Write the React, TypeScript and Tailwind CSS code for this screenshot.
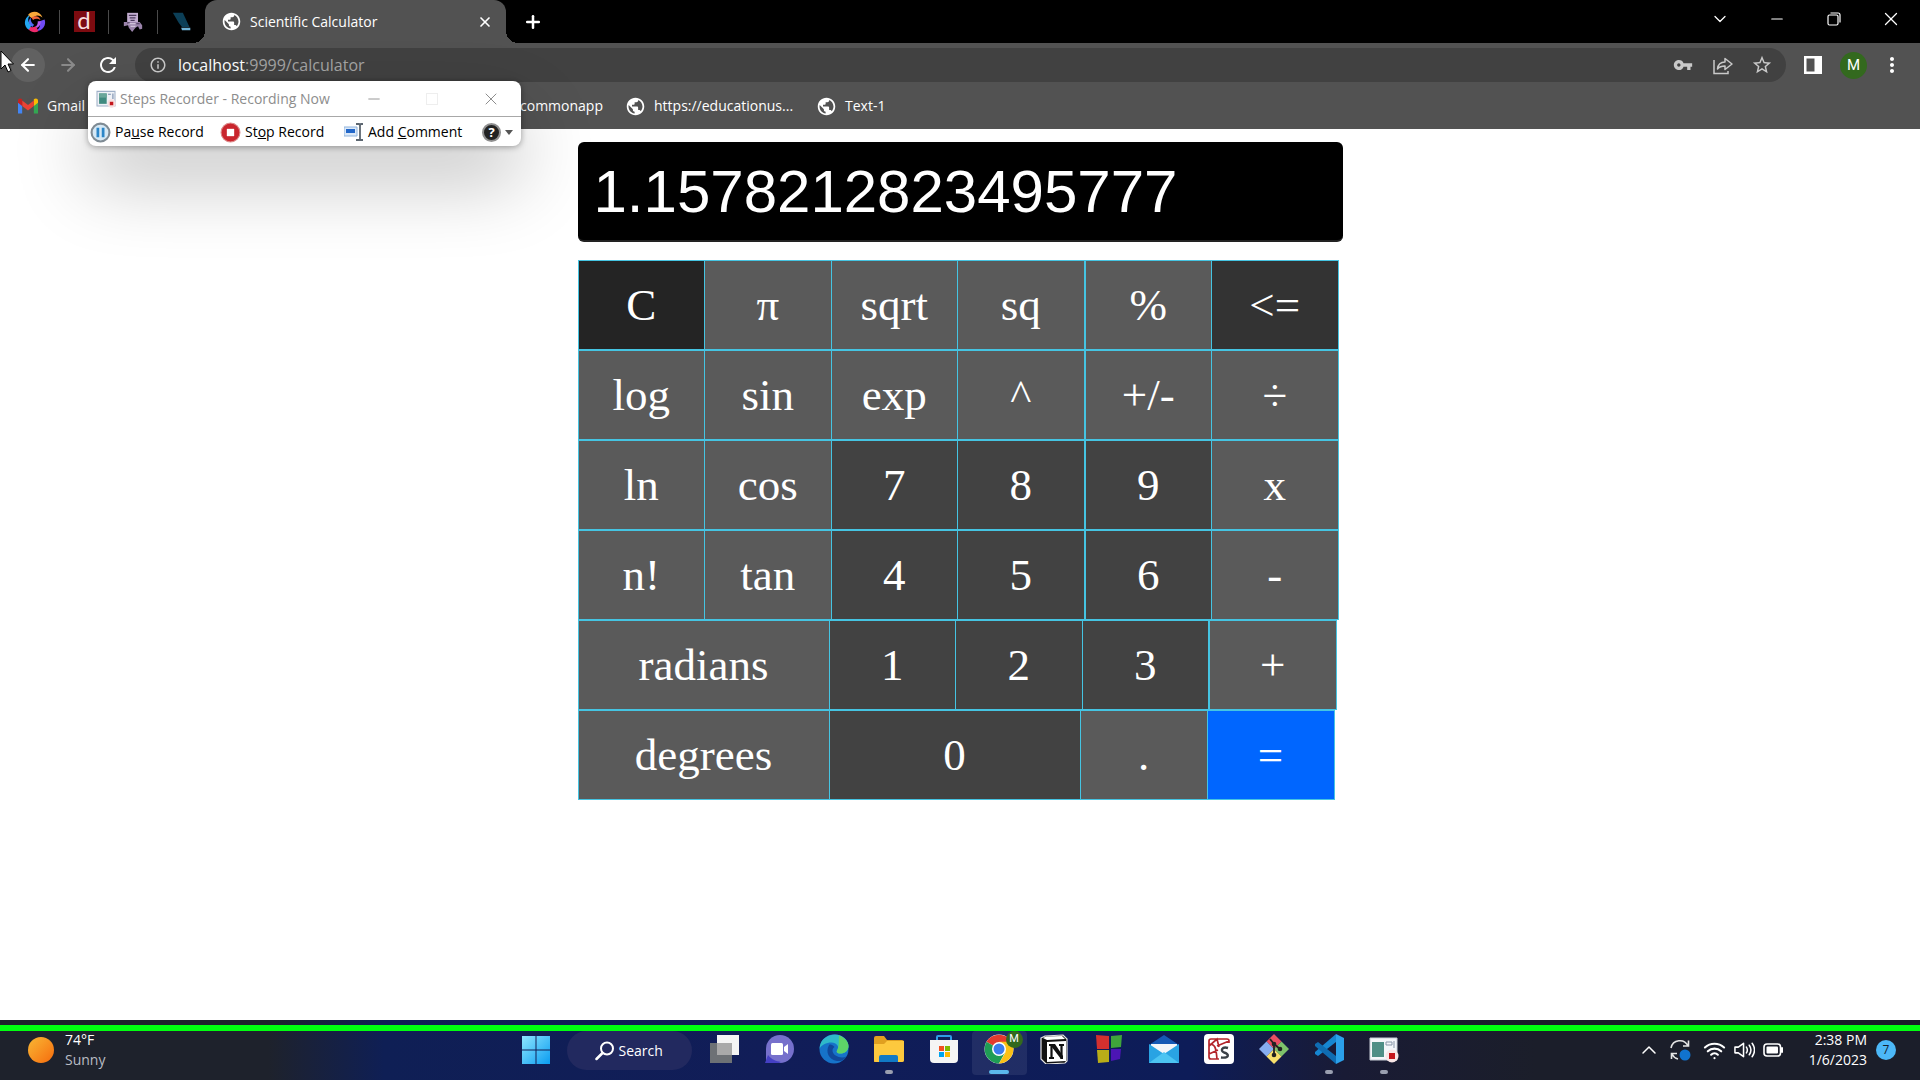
import React from "react";
import { X, Plus, ChevronDown, ChevronUp, Minus, ArrowLeft, ArrowRight, Wifi } from "lucide-react";
import { MdRefresh, MdPublic, MdVpnKey, MdStarBorder, MdMoreVert, MdInfoOutline } from "react-icons/md";

const UI = "font-['Open_Sans','Noto_Sans',sans-serif]";

/* ---------- browser icons ---------- */

function SwirlIcon() {
  const blade = "M5 5C9 0 17 1 19.500 7.500C16 4.500 12 4.800 9.500 8.500C8 7.500 6.300 6.500 5 5Z";
  const inner = "M8.500 7.500C12 5 16.500 6 17.500 10C14.500 8 12 8.500 10 10Z";
  return (
    <svg viewBox="0 0 24 24" className="size-6">
      <path d={blade} fill="#f9a83a" />
      <path d={inner} fill="#f2643a" />
      <path d={blade} fill="#6f4bf5" transform="rotate(120 12 12)" />
      <path d={inner} fill="#b45cf0" transform="rotate(120 12 12)" />
      <path d={blade} fill="#ee2a6b" transform="rotate(205 12 12)" />
      <path d={blade} fill="#23a6f2" transform="rotate(265 12 12)" />
      <path d={inner} fill="#4f6cf5" transform="rotate(245 12 12)" />
    </svg>
  );
}

function RobotIcon() {
  return (
    <svg viewBox="0 0 24 24" className="size-5">
      <path d="M5 1h13v11H5z" fill="#c3aed1" />
      <path d="M7 4h9M8 7h7M9 10h5" stroke="#4b3a5c" strokeWidth="1.500" />
      <path d="M1 12h19l3 4v4l-3 1-2-4-3 2-4 5-4-5-1-3-5 1z" fill="#9a83aa" />
      <path d="M6 14h9M9 17h6" stroke="#e2d9ea" strokeWidth="1.300" />
      <path d="M5 13h3M16 14h4" stroke="#4b3a5c" strokeWidth="1.300" />
    </svg>
  );
}

function FinIcon() {
  return (
    <svg viewBox="0 0 24 24" className="size-5">
      <path d="M1 1h12l8 17h-9L8 13z" fill="#0c3f57" />
      <path d="M11 19h11v3H12z" fill="#6fb4d8" />
    </svg>
  );
}

function GmailIcon() {
  return (
    <svg viewBox="0 0 24 18" className="h-4 w-5">
      <path d="M0 2v16h5V6z" fill="#4285f4" />
      <path d="M24 2v16h-5V6z" fill="#34a853" />
      <path d="M19 2.500V9l5-4V2.500C24 0 21-.8 19 1z" fill="#fbbc04" />
      <path d="M5 2.500V9l7 5.500L19 9V2.500l-7 5.300z" fill="#ea4335" />
      <path d="M5 2.500V9L0 5V2.500C0 0 3-.8 5 1z" fill="#c5221f" />
    </svg>
  );
}

function ShareIcon() {
  return (
    <svg viewBox="0 0 20 20" className="size-5" fill="none" stroke="#c9c9c9" strokeWidth="1.500">
      <path d="M1 5v13.500h14V16" />
      <path d="M4.500 14C5 9.500 8 7 12 7V3.500L19 9l-7 5.500V11c-3.500 0-5.500.5-7.500 3z" strokeLinejoin="round" />
    </svg>
  );
}

function RecorderIcon({ className }: { className: string }) {
  return (
    <svg viewBox="0 0 28 26" className={className}>
      <path d="M1 2h26v21H1z" fill="#eef1f6" stroke="#9fb0c8" strokeWidth="1.500" />
      <path d="M4 5h11v15H4z" fill="#3f8a7f" />
      <path d="M4 5h11v6H4z" fill="#6aa79b" />
      <path d="M17 6h4M24 5v8" stroke="#6f86a8" strokeWidth="1.500" />
      <circle cx="22" cy="19.500" r="6" fill="#f6dede" />
      <path d="M19.500 17h5v5h-5z" fill="#c4161c" />
    </svg>
  );
}

/* ---------- tab strip and toolbars ---------- */

function TabStrip() {
  return (
    <div className="flex h-[43px] items-stretch bg-black text-white">
      <div className="flex items-center pl-[11px]">
        <button aria-label="Pinned tab 1" className="flex h-6 w-[49px] items-center justify-center border-r border-[#4a4a4a]"><SwirlIcon /></button>
        <button aria-label="Pinned tab 2" className="flex h-6 w-[49px] items-center justify-center border-r border-[#4a4a4a]">
          <span className="flex size-[21px] items-center justify-center bg-[#7d0b10] pb-1 font-['Lato',sans-serif] text-2xl leading-none text-[#f6dcdc]">d</span>
        </button>
        <button aria-label="Pinned tab 3" className="flex h-6 w-[49px] items-center justify-center border-r border-[#4a4a4a]"><RobotIcon /></button>
        <button aria-label="Pinned tab 4" className="flex h-6 w-[47px] items-center justify-center"><FinIcon /></button>
      </div>
      <div className="relative flex w-[301px] items-center rounded-t-xl bg-[#525252] pr-3 pl-4">
        <span className="absolute bottom-0 -left-3 size-3 bg-[radial-gradient(circle_at_0_0,transparent_12px,#525252_12px)]" />
        <span className="absolute -right-3 bottom-0 size-3 bg-[radial-gradient(circle_at_100%_0,transparent_12px,#525252_12px)]" />
        <MdPublic className="size-[21px]" />
        <span className="ml-2 flex-1 truncate text-sm">Scientific Calculator</span>
        <button aria-label="Close tab" className="p-px"><X className="size-4" strokeWidth={2.5} /></button>
      </div>
      <button aria-label="New tab" className="ml-4 px-px"><Plus className="size-5" strokeWidth={3} /></button>
      <div className="ml-auto flex items-center pr-px pb-[6px]">
        <button aria-label="Search tabs" className="flex w-[57px] justify-center"><ChevronDown className="size-5" strokeWidth={1.5} /></button>
        <button aria-label="Minimize" className="flex w-[57px] justify-center"><Minus className="size-[18px]" strokeWidth={1.5} /></button>
        <button aria-label="Restore" className="flex w-[57px] justify-center">
          <svg viewBox="0 0 14 14" className="size-[14px]" fill="none" stroke="white" strokeWidth="1.200">
            <rect x="1" y="3" width="10" height="10" rx="1.500" />
            <path d="M3.500 1H11a2 2 0 0 1 2 2v7.500" />
          </svg>
        </button>
        <button aria-label="Close window" className="flex w-[57px] justify-center"><X className="size-[22px]" strokeWidth={1.4} /></button>
      </div>
    </div>
  );
}

function Toolbar() {
  return (
    <div className="flex h-11 items-center bg-[#525252] pr-4 text-white">
      <button aria-label="Back" className="ml-[11px] flex size-[34px] items-center justify-center rounded-full bg-[#616161]"><ArrowLeft className="size-5" strokeWidth={2.5} /></button>
      <button aria-label="Forward" className="ml-[6px] flex size-[34px] items-center justify-center text-[#8b8b8b]"><ArrowRight className="size-5" strokeWidth={2.5} /></button>
      <button aria-label="Reload" className="ml-[6px] flex size-[34px] items-center justify-center"><MdRefresh className="size-6" /></button>
      <div className="ml-[10px] flex h-[34px] flex-1 items-center rounded-full bg-[#414141] pr-[13px] pl-[14px] text-[#c9c9c9]">
        <MdInfoOutline className="size-[18px]" />
        <span className="ml-[11px] flex-1 text-base text-[#a4a4a4]"><span className="text-white">localhost</span>:9999/calculator</span>
        <button aria-label="Passwords"><MdVpnKey className="size-5" /></button>
        <button aria-label="Share" className="ml-5"><ShareIcon /></button>
        <button aria-label="Bookmark" className="ml-[18px]"><MdStarBorder className="size-[22px]" /></button>
      </div>
      <button aria-label="Side panel" className="ml-[18px]">
        <svg viewBox="0 0 18 18" className="size-[18px]"><path d="M0 0h18v18H0z" fill="white" /><path d="M2.500 2.500h8v13h-8z" fill="#525252" /></svg>
      </button>
      <button className="ml-[18px] flex size-[27px] items-center justify-center rounded-full bg-[#33691e] font-['Roboto',sans-serif] text-[15px]">M</button>
      <button aria-label="Menu" className="ml-[13px]"><MdMoreVert className="size-6" /></button>
    </div>
  );
}

function Bookmarks() {
  return (
    <nav className="flex h-[42px] items-center bg-[#525252] pb-1 pl-[18px] text-sm text-white">
      <a href="#gmail" className="flex w-[502px] items-center gap-[9px]"><GmailIcon />Gmail</a>
      <a href="#commonapp" className="w-[105px]">commonapp</a>
      <a href="#education" className="flex w-[191px] items-center gap-2"><MdPublic className="size-[21px]" />https://educationus...</a>
      <a href="#text" className="flex items-center gap-2"><MdPublic className="size-[21px]" />Text-1</a>
    </nav>
  );
}

function StepsRecorder() {
  return (
    <section className="absolute top-[81px] left-[88px] w-[433px] rounded-lg bg-white text-black shadow-[0_36px_76px_rgba(0,0,0,0.24),0_1px_6px_rgba(0,0,0,0.35)]">
      <header className="flex h-9 items-center border-b border-[#a8a8a8] pl-2 text-[#8d8d8d]">
        <RecorderIcon className="h-[18px] w-5" />
        <h2 className="ml-1 w-[224px] text-sm whitespace-nowrap">Steps Recorder - Recording Now</h2>
        <button aria-label="Minimize recorder" className="flex w-[59px] justify-center"><Minus className="size-[18px]" strokeWidth={1.2} /></button>
        <button aria-label="Maximize recorder" className="flex w-[57px] justify-center" disabled><span className="size-3 border border-[#eeeeee]" /></button>
        <button aria-label="Close recorder" className="flex w-[61px] justify-center"><X className="size-5" strokeWidth={1.2} /></button>
      </header>
      <div className="flex h-[29px] items-center pt-px pl-[2px] text-sm whitespace-nowrap">
        <button className="flex w-[130px] items-center gap-1">
          <svg viewBox="0 0 20 20" className="size-[21px]"><circle cx="10" cy="10" r="8.500" fill="#d5e8f5" stroke="#7f8b94" strokeWidth="2" /><path d="M7.500 5.500v9M12.500 5.500v9" stroke="#2b86c8" strokeWidth="2.600" /></svg>
          <span>Pa<u>u</u>se Record</span>
        </button>
        <button className="flex w-[124px] items-center gap-1">
          <svg viewBox="0 0 20 20" className="size-[21px]"><circle cx="10" cy="10" r="9" fill="#c9252d" stroke="#dd8a8a" /><path d="M6.500 6.500h7v7h-7z" fill="white" /></svg>
          <span>St<u>o</u>p Record</span>
        </button>
        <button className="flex w-[138px] items-center gap-1">
          <svg viewBox="0 0 20 20" className="size-5"><path d="M0 5h13v9H0z" fill="#dce9f8" stroke="#8fb3dc" /><path d="M2 7h9v4H2z" fill="#2267c9" /><path d="M12 2h3l1 1 1-1h2M12 18h3l1-1 1 1h2M16 3v14" stroke="#5c6670" strokeWidth="1.800" fill="none" /></svg>
          <span>Add <u>C</u>omment</span>
        </button>
        <button aria-label="Help" className="flex items-center gap-1">
          <span className="flex size-[19px] items-center justify-center rounded-full border-2 border-[#8f8f8f] bg-[#222222] text-[13px] font-bold text-white">?</span>
          <svg viewBox="0 0 8 5" className="h-[5px] w-2"><path d="M0 0h8L4 5z" fill="#555" /></svg>
        </button>
      </div>
    </section>
  );
}

/* ---------- calculator ---------- */

type Key = { t: string; tone?: "clear" | "back" | "num" | "eq"; wide?: boolean; edge?: boolean };

const rows: { width: string; keys: Key[] }[] = [
  { width: "w-[761px]", keys: [{ t: "C", tone: "clear" }, { t: "π" }, { t: "sqrt" }, { t: "sq", edge: true }, { t: "%" }, { t: "<=", tone: "back" }] },
  { width: "w-[761px]", keys: [{ t: "log" }, { t: "sin" }, { t: "exp" }, { t: "^", edge: true }, { t: "+/-" }, { t: "÷" }] },
  { width: "w-[761px]", keys: [{ t: "ln" }, { t: "cos" }, { t: "7", tone: "num" }, { t: "8", tone: "num", edge: true }, { t: "9", tone: "num" }, { t: "x" }] },
  { width: "w-[761px]", keys: [{ t: "n!" }, { t: "tan" }, { t: "4", tone: "num" }, { t: "5", tone: "num", edge: true }, { t: "6", tone: "num" }, { t: "-" }] },
  { width: "w-[759px]", keys: [{ t: "radians", wide: true }, { t: "1", tone: "num" }, { t: "2", tone: "num" }, { t: "3", tone: "num", edge: true }, { t: "+" }] },
  { width: "w-[757px]", keys: [{ t: "degrees", wide: true }, { t: "0", tone: "num", wide: true }, { t: "." }, { t: "=", tone: "eq" }] },
];

const tones = {
  clear: "bg-[#242424]",
  back: "bg-[#333333]",
  num: "bg-[#424242]",
  eq: "bg-[#0066ff]",
  fn: "bg-[#5a5a5a]",
};

function Calculator() {
  return (
    <main className="mx-auto w-[765px] max-w-full pt-[13px]">
      <input
        aria-label="Result"
        readOnly
        value="1.1578212823495777"
        className="block h-[100px] w-full rounded-md border-b-2 border-[#222222] bg-black px-4 font-['Liberation_Sans',Arial,sans-serif] text-6xl text-white outline-none"
      />
      <div className="mt-[18px] font-['Liberation_Serif','Times_New_Roman',serif] text-[45px] leading-none text-white">
        {rows.map((row, i) => (
          <div key={i} className={`flex max-w-full ${row.width}`}>
            {row.keys.map((k) => (
              <button
                key={k.t}
                className={`h-[90px] border-y border-l border-[#45c4e2] last:border-r ${k.wide ? "w-[251px]" : "min-w-0 flex-1"} ${k.edge ? "border-r" : ""} ${tones[k.tone ?? "fn"]}`}
              >
                {k.t}
              </button>
            ))}
          </div>
        ))}
      </div>
    </main>
  );
}

/* ---------- taskbar ---------- */

function WindowsIcon() {
  return (
    <svg viewBox="0 0 30 30" className="size-[30px]">
      <defs><linearGradient id="win" x1="0" y1="0" x2="1" y2="1"><stop stopColor="#8ee6ff" /><stop offset="1" stopColor="#0a9cf0" /></linearGradient></defs>
      <path d="M1 1h13.500v13.500H1zM15.500 1H29v13.500H15.500zM1 15.500h13.500V29H1zM15.500 15.500H29V29H15.500z" fill="url(#win)" />
    </svg>
  );
}

const apps: { name: string; mark?: "run" | "active"; icon: React.ReactNode }[] = [
  { name: "Task View", icon: <><path d="M8 1h22v20H8z" fill="#f4f4f4" /><path d="M1 9h22v20H1z" fill="#6d7175" /><path d="M8 9h15v12H8z" fill="#a9a9a9" /></> },
  { name: "Chat", icon: <><path d="M2 28V15A14 14 0 1 1 16 29H2z" fill="#7670cc" /><path d="M1 29l3-8c4 5 8 6 13 7l-2 1z" fill="#4540c4" /><rect x="7" y="9" width="12" height="12" rx="1.500" fill="#fff" /><path d="M20 13l4-3v10l-4-3z" fill="#fff" /></> },
  { name: "Edge", icon: <><circle cx="15" cy="15" r="14.500" fill="#1673c9" /><path d="M.5 15C1 4 10 .5 16 .5c8 0 13.500 6 13.500 11.500 0 5-4 7.500-8 7.500-4 0-4.500-2-3-4 2-3-1-7-6-7S2 11 .5 15z" fill="#2fb9c9" /><path d="M20 1.500c6 2 9.500 6.500 9.500 10.500 0 5-4 7.500-8 7.500-4 0-4.500-2-3-4 2-5 1-9 1.500-14z" fill="#5ed368" /><path d="M10 11c-4 7 0 15 8 16 5 .5 8-2 9.500-4.500C22 25 14 22 13.500 17c0-2 .5-3 2-4-1.500-2-4-3-5.500-2z" fill="#10489b" /></> },
  { name: "File Explorer", mark: "run", icon: <><path d="M0 4a2 2 0 0 1 2-2h8l3 4h15a2 2 0 0 1 2 2v18a2 2 0 0 1-2 2H0z" fill="#e0a020" /><path d="M0 10h10l3-3h17v19a2 2 0 0 1-2 2H2a2 2 0 0 1-2-2z" fill="#fdc93e" /><path d="M5 28v-5a2 2 0 0 1 2-2h15a2 2 0 0 1 2 2v5z" fill="#1179c6" /></> },
  { name: "Store", icon: <><path d="M8 8V3a1 1 0 0 1 1-1h12a1 1 0 0 1 1 1v5" fill="none" stroke="#2f9be6" strokeWidth="2" /><path d="M1 6h28v19a4 4 0 0 1-4 4H5a4 4 0 0 1-4-4z" fill="#f5f5f5" /><path d="M10 12h5v5h-5z" fill="#f25022" /><path d="M16 12h5v5h-5z" fill="#7fba00" /><path d="M10 18h5v5h-5z" fill="#00a4ef" /><path d="M16 18h5v5h-5z" fill="#ffb900" /></> },
  { name: "Chrome", mark: "active", icon: <><circle cx="15" cy="15" r="14.500" fill="#fff" /><path d="M15 15L2.500 7.800A14.500 14.500 0 0 1 27.500 7.800z" fill="#e33b2e" /><path d="M15 15L2.500 7.800A14.500 14.500 0 0 0 15 29.500l6-11z" fill="#1f9d55" /><path d="M15 15l6.500 3.500L15 29.500A14.500 14.500 0 0 0 27.500 7.800H15z" fill="#fbc116" /><circle cx="15" cy="15" r="7" fill="#fff" /><circle cx="15" cy="15" r="5.500" fill="#3b7ded" /></> },
  { name: "Notion", icon: <><path d="M2 4l4-2 18-1 4 4v22l-2 2-19 1-5-5z" fill="#111" stroke="#e4e4e4" strokeWidth="1.200" /><path d="M4 4l3-1.500L23 2l3 3-18 1z" fill="#fff" /><path d="M8 8l19-1v20L8 28z" fill="#fff" /><path d="M12.500 25V11M22.500 25V11M10 11h4M20 11h5M10 24h5" stroke="#111" strokeWidth="2.200" fill="none" /><path d="M12 10h4l8 12v3h-2L12 12z" fill="#111" /></> },
  { name: "Blocks", icon: <><path d="M2 1l13 1v13L3 15z" fill="#d3302f" /><path d="M17 2l11-1-1 12-10 1z" fill="#3fa53b" /><path d="M3 16h12v12L4 29z" fill="#b9ad18" /><path d="M17 15h10l-1 10-9 2z" fill="#4c15b4" /></> },
  { name: "Mail", icon: <><path d="M0 11L15 1l15 10v6H0z" fill="#1659b5" /><path d="M2 10h26v9H2z" fill="#f3f5f9" /><path d="M0 10l15 10L30 10v19H0z" fill="#29a3e3" /><path d="M0 29l15-11 15 11z" fill="#4cc4f2" /></> },
  { name: "Spyder", icon: <><rect width="30" height="30" rx="4" fill="#fff" /><path d="M25 9V7a2 2 0 0 0-2-2H7a2 2 0 0 0-2 2v16a2 2 0 0 0 2 2h8M5 12l8-7 2 8M5 10c6 0 7 3 8 15M13 12l12-5M5 20l9-4" fill="none" stroke="#b3242a" strokeWidth="1.700" /><path d="M24 14c-6-2-8 3-4 4.500 6 1.500 5 6-3 5" fill="none" stroke="#3b4147" strokeWidth="2.400" /></> },
  { name: "Git Bash", icon: <><path d="M15 0l7.500 7.500L15 15 7.500 7.500z" fill="#e94e63" /><path d="M22.500 7.500L30 15l-7.500 7.500L15 15z" fill="#7ec26b" /><path d="M7.500 7.500L15 15l-7.500 7.500L0 15z" fill="#87aef0" /><path d="M15 15l7.500 7.500L15 30l-7.500-7.500z" fill="#f7df6c" /><path d="M11 5l4 5v12M15 10l6 5" stroke="#222" strokeWidth="1.800" fill="none" /><circle cx="15" cy="10" r="2.300" fill="#222" /><circle cx="21" cy="15" r="2.300" fill="#222" /><circle cx="15" cy="21" r="2.300" fill="#222" /></> },
  { name: "VS Code", mark: "run", icon: <><path d="M22 0v8L4 22l-3-2v-2z" fill="#1686d1" /><path d="M22 30v-8L4 8l-3 2v2z" fill="#0f6cb2" /><path d="M22 0l8 4v22l-8 4z" fill="#2ba0ea" /></> },
  { name: "Steps Recorder", mark: "run", icon: <><path d="M1 4h27v22H1z" fill="#f4f6f9" stroke="#c7cdd6" /><path d="M3 8h12v15H3z" fill="#4f8f86" /><path d="M17 8h6v3h-6zM25 7v7" stroke="#8795a8" fill="none" /><circle cx="23" cy="22" r="6.500" fill="#f8e6e6" /><path d="M20 19h6v6h-6z" fill="#c4161c" /></> },
];

function Taskbar() {
  return (
    <footer className="relative flex h-[60px] shrink-0 items-start bg-[linear-gradient(90deg,#1e222c_0%,#1e222c_14%,#0f1f55_20%,#111d58_40%,#0d1c58_62%,#191b35_70%,#1b1e2a_80%)] text-white">
      <div className="absolute inset-x-0 top-[5px] h-[6px] bg-[#00ff10]" />
      <button className="flex flex-1 items-center gap-[11px] pt-[10px] pl-7 text-left text-sm leading-5">
        <span className="size-[26px] rounded-full bg-linear-to-br from-[#f7b733] to-[#f56a0a]" />
        <span className="block">74°F<span className="block text-[#b9bcc4]">Sunny</span></span>
      </button>
      <div className="flex items-start pt-[11px] pl-2">
        <button aria-label="Start" className="mt-1 mr-4"><WindowsIcon /></button>
        <button className="mr-[5px] flex h-[39px] w-[125px] items-center rounded-full bg-[#22295f] pl-7">
          <svg viewBox="0 0 20 20" className="size-5" fill="none" stroke="white" strokeWidth="2"><circle cx="12" cy="7.500" r="6" /><path d="M7.500 12L1.500 18" strokeLinecap="round" strokeWidth="2.500" /></svg>
          <span className="ml-1 text-sm">Search</span>
        </button>
        {apps.map((a) => (
          <button key={a.name} aria-label={a.name} className={`relative flex h-11 w-[55px] flex-col items-center pt-[3px] ${a.mark === "active" ? "rounded bg-white/8" : ""}`}>
            <svg viewBox="0 0 30 30" className="size-[30px]">{a.icon}</svg>
            {a.mark === "active" && <span className="absolute top-0 right-1 flex size-[17px] items-center justify-center rounded-full bg-[#33691e] font-['Roboto',sans-serif] text-[11px]">M</span>}
            {a.mark && <span className={a.mark === "active" ? "mt-[6px] h-1 w-5 rounded-full bg-[#5bb8ec]" : "mt-[6px] h-1 w-2 rounded-full bg-[#9a9fb0]"} />}
          </button>
        ))}
      </div>
      <div className="flex flex-1 items-start justify-end pt-[10px] pr-6">
        <div className="flex h-10 items-center">
          <button aria-label="Hidden icons"><ChevronUp className="size-6" strokeWidth={1.5} /></button>
          <button aria-label="Updates" className="ml-2">
            <svg viewBox="0 0 22 22" className="size-[22px]" fill="none" stroke="#e4e4e4" strokeWidth="1.600"><path d="M2 9a9 9 0 0 1 17-2M19.500 1.500V7H14M9 20a9 9 0 0 1-6-5M2.500 20v-5.500H8" /><circle cx="16" cy="16" r="5.500" fill="#1173cf" stroke="none" /></svg>
          </button>
          <button aria-label="Network" className="ml-3"><Wifi className="size-[23px]" strokeWidth={2.2} /></button>
          <button aria-label="Volume" className="ml-2">
            <svg viewBox="0 0 22 18" className="h-[18px] w-[21px]" fill="none" stroke="white" strokeWidth="1.600" strokeLinecap="round" strokeLinejoin="round"><path d="M1 6h3.500L10 2v14l-5.500-4H1zM13 6q2 3 0 6M16 4q3.500 5 0 10M19 2q5 7 0 14" /></svg>
          </button>
          <button aria-label="Battery" className="ml-2">
            <svg viewBox="0 0 21 14" className="h-[14px] w-[21px]"><rect x="1" y="1" width="16.500" height="12" rx="3" fill="none" stroke="white" strokeWidth="1.600" /><rect x="3.500" y="3.500" width="11.500" height="7" rx="1" fill="white" /><path d="M19 5v4" stroke="white" strokeWidth="2" strokeLinecap="round" /></svg>
          </button>
        </div>
        <button className="ml-[22px] w-[61px] text-sm leading-5 whitespace-nowrap">
          <span className="flex flex-col items-end"><span>2:38 PM</span><span>1/6/2023</span></span>
        </button>
        <button className="mt-[10px] ml-[9px] flex size-5 items-center justify-center rounded-full bg-[#4cb8f7] text-xs text-[#14202c]">7</button>
      </div>
    </footer>
  );
}

export default function App() {
  return (
    <div className={`relative flex min-h-screen flex-col overflow-hidden bg-white ${UI}`}>
      <TabStrip />
      <Toolbar />
      <Bookmarks />
      <div className="flex-1"><Calculator /></div>
      <Taskbar />
      <StepsRecorder />
      <svg viewBox="0 0 14 24" className="absolute top-[50px] left-0 h-6 w-[14px]"><path d="M1 1v18l4-4 3 7 3-1.500L8 14h5.500z" fill="white" stroke="black" /></svg>
    </div>
  );
}
